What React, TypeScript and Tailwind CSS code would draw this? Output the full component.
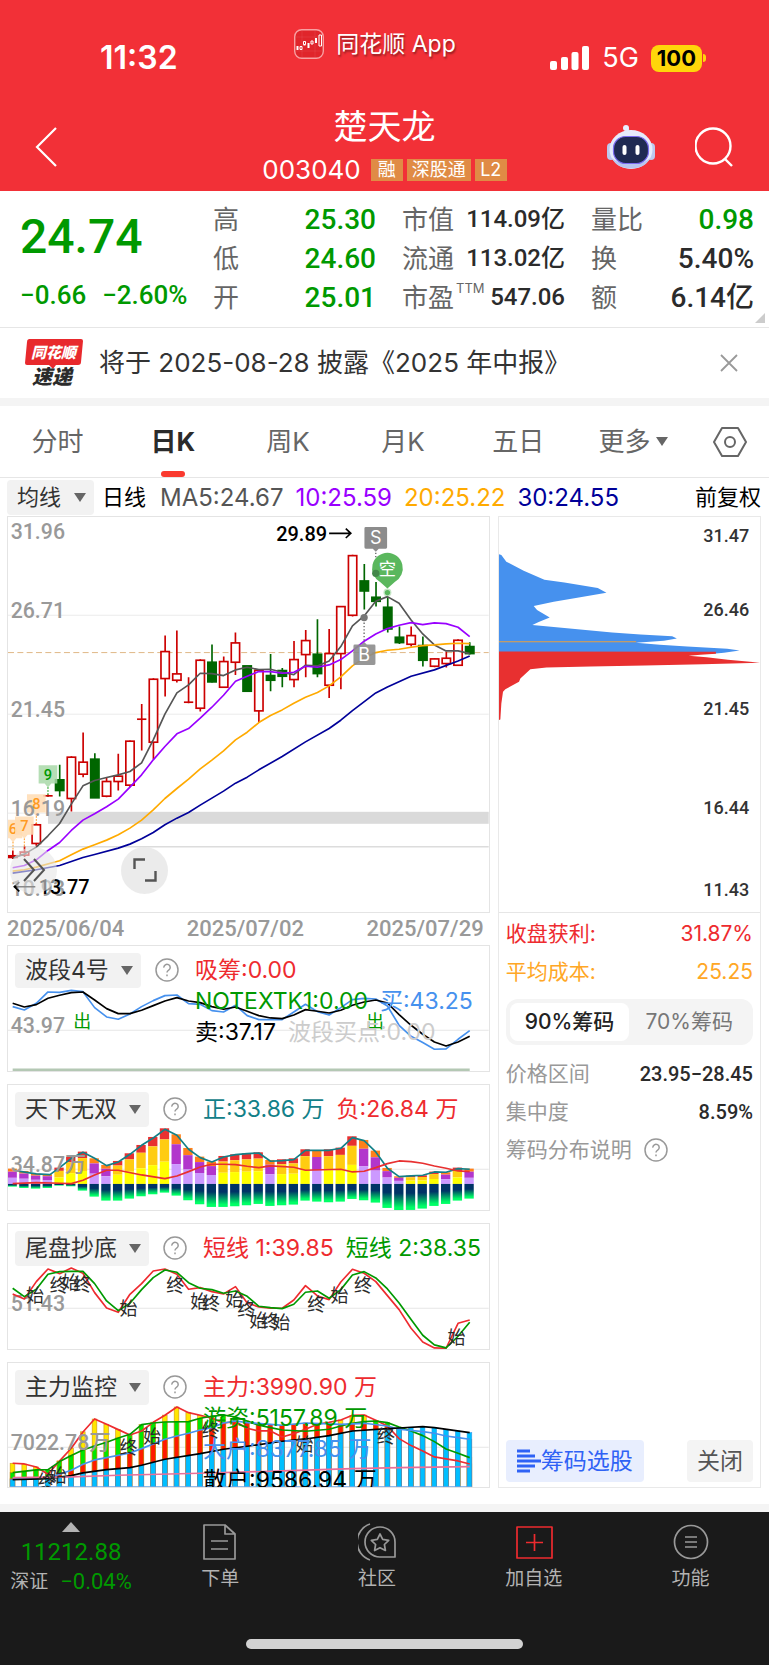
import { useState } from 'react';
import type { ReactNode } from 'react';

type Point = [number, number];

const NUM = "font-['Roboto','Noto_Sans_CJK_SC',sans-serif]";

// Charts are drawn on a 3x grid: one bar every STEP units
const STEP = 35.17;
const barX = (i: number) => 38.5 + STEP * i;

const quoteColumns = [
  [
    { label: '高', value: '25.30', color: 'text-[#009900]' },
    { label: '低', value: '24.60', color: 'text-[#009900]' },
    { label: '开', value: '25.01', color: 'text-[#009900]' },
  ],
  [
    { label: '市值', value: '114.09亿', color: 'text-[#2b2b2b]', small: true },
    { label: '流通', value: '113.02亿', color: 'text-[#2b2b2b]', small: true },
    { label: '市盈', sup: 'TTM', value: '547.06', color: 'text-[#2b2b2b]', small: true },
  ],
  [
    { label: '量比', value: '0.98', color: 'text-[#009900]' },
    { label: '换', value: '5.40%', color: 'text-[#2b2b2b]' },
    { label: '额', value: '6.14亿', color: 'text-[#2b2b2b]' },
  ],
];

const tabs = ['分时', '日K', '周K', '月K', '五日', '更多'];

// [up?, high, top, bottom, low]
const candles: [number, number, number, number, number][] = [
  [1, 1022, 1038, 1043, 1048], [1, 1010, 1027, 1036, 1042], [1, 940, 945, 1001, 1008],
  [1, 854, 858, 858, 861], [0, 765, 810, 842, 860], [1, 739, 742, 866, 905],
  [1, 668, 757, 793, 802], [0, 730, 748, 864, 864], [1, 802, 815, 859, 862],
  [1, 732, 799, 815, 842], [1, 692, 694, 826, 832], [1, 582, 628, 628, 722],
  [1, 505, 508, 697, 748], [1, 377, 425, 506, 560], [1, 362, 492, 511, 518],
  [1, 502, 577, 577, 580], [1, 448, 451, 595, 605], [0, 404, 457, 516, 518],
  [1, 440, 455, 532, 534], [1, 368, 399, 457, 495], [0, 468, 468, 544, 545],
  [1, 478, 481, 603, 638], [0, 432, 497, 511, 544], [0, 474, 482, 499, 532],
  [1, 393, 449, 509, 532], [1, 360, 392, 434, 502], [0, 328, 433, 491, 502],
  [1, 357, 431, 526, 564], [1, 288, 290, 431, 538], [1, 134, 137, 316, 320],
  [0, 162, 213, 243, 299], [0, 216, 262, 274, 290], [0, 262, 292, 357, 368],
  [0, 350, 382, 398, 402], [1, 350, 377, 403, 410], [0, 380, 407, 451, 470],
  [1, 445, 447, 469, 472], [1, 425, 445, 461, 473], [1, 388, 391, 466, 468],
  [0, 397, 410, 431, 434],
];

const ma5 = '38,1045 73,1033 109,1012 144,978 179,941 214,883 249,828 284,812 320,803 355,795 390,785 425,759 460,690 495,613 531,549 566,525 601,490 636,491 671,497 707,480 742,472 777,479 812,478 847,487 882,494 917,466 953,468 988,453 1023,410 1058,348 1093,318 1128,274 1163,260 1198,280 1234,330 1269,372 1304,405 1339,423 1375,423 1410,431';
const ma10 = '38,1074 73,1067 109,1050 144,1022 179,998 214,962 249,931 284,912 320,891 355,868 390,832 425,795 460,750 495,710 531,672 566,656 601,625 636,592 671,556 707,514 742,499 777,485 812,485 847,490 882,487 917,469 953,472 988,465 1023,449 1058,423 1093,394 1128,372 1163,356 1198,346 1234,338 1269,344 1304,339 1339,341 1375,352 1410,380';
const ma20 = '38,1084 73,1080 109,1072 179,1053 214,1035 249,1018 284,1005 320,991 355,975 390,955 425,931 460,900 495,866 531,836 566,808 601,777 636,751 671,723 707,690 742,667 777,638 812,617 847,600 882,580 917,562 953,548 988,528 1023,501 1058,468 1093,444 1128,428 1163,421 1198,418 1234,412 1269,407 1304,405 1339,402 1375,400 1410,401';
const ma30 = '38,1090 109,1080 179,1067 249,1043 284,1034 355,1015 390,1003 425,987 460,968 495,945 531,925 566,908 601,886 636,865 671,844 707,820 742,802 777,780 847,740 917,696 988,656 1023,631 1058,602 1128,549 1163,531 1234,499 1304,480 1375,453 1410,438';

const waveBuy = '38,197 73,207 109,187 144,153 179,154 214,148 249,152 284,200 320,228 355,235 390,219 425,197 460,179 495,164 531,162 566,188 601,190 636,209 671,213 707,193 742,224 777,236 812,236 847,236 882,213 917,190 953,212 988,222 1023,200 1058,176 1093,172 1128,174 1163,195 1198,253 1234,286 1269,305 1304,325 1339,324 1375,295 1410,269';
const waveSell = '38,187 73,198 109,191 144,172 179,163 214,155 249,153 284,177 320,203 355,218 390,218 425,208 460,194 495,180 531,170 566,180 601,185 636,197 671,205 707,198 742,211 777,224 812,231 847,233 882,222 917,206 953,211 988,216 1023,208 1058,193 1093,183 1128,177 1163,186 1198,221 1234,253 1269,280 1304,303 1339,315 1375,303 1410,286';

// Volume strength bars: [top, warm?, bottom]
const strength: [number, number, number][] = [
  [683, 0, 737], [690, 0, 741], [698, 0, 743], [700, 0, 741], [680, 1, 734], [648, 1, 736],
  [632, 1, 749], [652, 0, 767], [672, 0, 779], [660, 1, 779], [637, 1, 773], [612, 1, 766],
  [588, 1, 760], [562, 1, 755], [580, 0, 764], [621, 0, 778], [647, 0, 790], [662, 0, 798],
  [645, 1, 798], [640, 1, 796], [637, 1, 793], [634, 1, 789], [657, 0, 795], [655, 1, 793],
  [652, 1, 791], [625, 1, 779], [628, 0, 782], [625, 1, 784], [620, 1, 782], [586, 1, 774],
  [597, 0, 778], [629, 0, 785], [681, 0, 801], [706, 0, 808], [704, 1, 807], [703, 1, 803],
  [692, 1, 795], [694, 0, 789], [680, 1, 779], [683, 0, 773],
];
const strengthPos = '50,690 109,699 150,701 179,680 214,652 249,634 284,652 320,674 355,663 390,640 425,613 460,591 495,565 531,583 566,625 601,650 636,663 671,648 707,641 742,638 777,636 812,661 847,659 882,656 917,628 988,628 1023,622 1058,590 1093,599 1128,633 1163,682 1198,707 1234,705 1269,703 1304,693 1339,694 1375,683 1410,685';
const strengthNeg = '38,728 109,725 179,727 214,728 249,718 284,702 320,688 355,688 425,702 495,713 531,705 566,692 601,678 636,670 671,670 707,671 742,676 777,680 812,675 882,679 917,688 1023,685 1058,693 1093,691 1128,680 1163,668 1198,660 1234,662 1269,667 1304,675 1339,682 1375,690 1410,692';

const short1 = '38,249 73,264 109,212 144,174 179,188 214,171 249,187 284,245 320,291 355,304 390,250 425,218 460,180 495,174 531,190 566,235 601,230 636,242 671,249 707,227 742,276 777,288 812,292 847,292 882,267 917,224 953,255 988,266 1023,213 1058,175 1093,187 1128,212 1163,254 1198,296 1234,352 1269,393 1304,411 1339,412 1375,337 1410,327';
const short2 = '38,232 73,257 109,235 144,190 179,182 214,181 249,181 284,218 320,270 355,299 390,277 425,236 460,200 495,177 531,184 566,215 601,232 636,236 671,247 707,240 742,256 777,286 812,290 847,293 882,280 917,244 953,240 988,262 1023,236 1058,192 1093,182 1128,201 1163,234 1198,276 1234,326 1269,373 1304,402 1339,411 1375,376 1410,334';
const shortMarks: [string, number, number][] = [
  ['始', 105, 252], ['终', 176, 222], ['始', 212, 214], ['终', 247, 220], ['始', 386, 292],
  ['终', 526, 224], ['始', 598, 272], ['终', 633, 278], ['始', 703, 266], ['终', 739, 296],
  ['始', 775, 328], ['终', 810, 330], ['始', 844, 334], ['终', 949, 280], ['始', 1019, 254],
  ['终', 1090, 222], ['始', 1370, 378],
];

const mainForce: Point[] = [[38, 757], [73, 759], [109, 768], [144, 790], [179, 750], [214, 712], [249, 663], [284, 624], [320, 640], [355, 656], [390, 672], [425, 660], [460, 634], [495, 613], [531, 588], [566, 605], [601, 613], [636, 622], [671, 636], [707, 632], [742, 652], [777, 660], [812, 660], [847, 678], [882, 668], [917, 655], [953, 640], [988, 634], [1023, 627], [1058, 613], [1093, 612], [1128, 628], [1163, 645], [1198, 683], [1234, 704], [1269, 720], [1304, 738], [1339, 744], [1375, 750], [1410, 759]];
const hotMoney: Point[] = [[38, 785], [109, 777], [144, 776], [179, 752], [214, 734], [249, 717], [284, 705], [320, 694], [355, 681], [390, 670], [425, 641], [460, 636], [495, 633], [566, 632], [601, 622], [636, 616], [671, 612], [707, 618], [742, 630], [777, 643], [812, 650], [847, 657], [917, 661], [988, 655], [1023, 645], [1058, 637], [1093, 632], [1128, 630], [1163, 635], [1198, 648], [1234, 660], [1269, 674], [1304, 692], [1339, 714], [1375, 727], [1410, 740]];
const bigHolder: Point[] = [[38, 803], [144, 802], [179, 790], [214, 778], [249, 760], [284, 747], [320, 740], [390, 726], [425, 713], [495, 685], [531, 675], [566, 667], [601, 657], [636, 650], [671, 636], [707, 630], [742, 635], [812, 640], [847, 643], [917, 636], [1023, 640], [1093, 637], [1163, 645], [1198, 655], [1269, 662], [1304, 667], [1339, 675], [1375, 680], [1410, 685]];
const retail: Point[] = [[38, 806], [144, 803], [214, 794], [249, 786], [320, 776], [390, 770], [425, 763], [495, 745], [601, 728], [671, 715], [742, 706], [847, 691], [917, 684], [988, 674], [1058, 660], [1163, 653], [1198, 651], [1269, 647], [1304, 650], [1410, 665]];
const forceMarks: [string, number, number][] = [
  ['终', 140, 810], ['始', 173, 794], ['终', 386, 708], ['始', 456, 676],
  ['终', 632, 658], ['始', 914, 700], ['终', 1159, 677],
];

const valueAt = (line: Point[], x: number) => {
  const next = line.findIndex(([px]) => px >= x);
  if (next === -1) return line[line.length - 1][1];
  if (next === 0) return line[0][1];
  const [x0, y0] = line[next - 1];
  const [x1, y1] = line[next];
  return y0 + ((y1 - y0) * (x - x0)) / (x1 - x0);
};

const toPoints = (line: Point[]) => line.map((p) => p.join(',')).join(' ');

const Line = ({ points, color }: { points: string; color: string }) => (
  <polyline points={points} fill="none" stroke={color} strokeWidth="5" strokeLinejoin="round" />
);

const Marks = ({ items }: { items: [string, number, number][] }) => (
  <g fontSize="54" fill="#2b2b2b" textAnchor="middle">
    {items.map(([t, x, y]) => (
      <text key={x} x={x} y={y + 20}>{t}</text>
    ))}
  </g>
);

const AxisLabel = ({ y, children }: { y: number; children: ReactNode }) => (
  <text x="32" y={y} className={`${NUM} font-medium`} fontSize="64" fill="#999">{children}</text>
);

const Caret = ({ className = '' }: { className?: string }) => (
  <svg viewBox="0 0 12 9" className={`h-[9px] w-3 ${className}`} aria-hidden="true">
    <path d="M0 0h12L6 9z" fill="currentColor" />
  </svg>
);

const Help = ({ label }: { label: string }) => (
  <button aria-label={label} className="shrink-0 text-[#999]">
    <svg viewBox="0 0 24 24" className="size-6" fill="none" stroke="currentColor" strokeWidth="1.5">
      <circle cx="12" cy="12" r="11" />
      <path d="M8.8 9.6a3.2 3.2 0 1 1 4.9 2.6c-1.1.7-1.7 1.2-1.7 2.4" />
      <path d="M12 16.6v1.6" />
    </svg>
  </button>
);

const Picker = ({ name, label }: { name: string; label: string }) => (
  <div className="grid shrink-0 items-center rounded bg-[#f2f2f2] text-[#333]">
    <select
      aria-label={label}
      className="[grid-area:1/1] h-[35px] appearance-none bg-transparent pl-2.5 pr-8 leading-[35px]"
    >
      <option>{name}</option>
    </select>
    <Caret className="pointer-events-none mr-2 justify-self-end text-[#666] [grid-area:1/1]" />
  </div>
);

const Indicator = ({ name, viewBox, legend, children }: {
  name: string;
  viewBox: string;
  legend: { text: string; color: string }[][];
  children: ReactNode;
}) => (
  <section className="grid overflow-hidden border border-[#e4e4e4] text-[23px]">
    <svg viewBox={viewBox} className="block w-full [grid-area:1/1]">{children}</svg>
    <div className="flex h-0 min-h-full items-start pl-[7px] pt-[7px] [grid-area:1/1]">
      <Picker name={name} label="选择指标" />
      <div className="ml-3.5 flex h-[35px] items-center">
        <Help label={`${name}说明`} />
      </div>
      <div className="ml-4 whitespace-nowrap pt-0.5 leading-[31px]">
        {legend.map((row, i) => (
          <div key={i} className="flex gap-3">
            {row.map((l) => (
              <span key={l.text} className={l.color}>{l.text}</span>
            ))}
          </div>
        ))}
      </div>
    </div>
  </section>
);

const StatusBar = () => (
  <div className="flex items-start">
    <div className="w-[38%] pl-[100px] pt-[38px] text-[32px] font-semibold leading-10">11:32</div>
    <div className="flex items-center gap-3 pl-0.5 pt-[29px]">
      <svg viewBox="0 0 30 30" className="size-[30px]">
        <rect x=".7" y=".7" width="28.6" height="28.6" rx="7" fill="#e0252b" stroke="#f8a0a2" strokeWidth="1.4" />
        <path d="M2 8h26M2 22h26M8 2v26M21 2v26" stroke="#fff" strokeOpacity=".12" strokeWidth=".6" />
        <path d="M3.500 17v4M10.500 12.500v4M14.500 14v5M22 9v5" stroke="#fff" strokeWidth="2" />
        <path d="M6 17.500h2v3H6zM9.500 12.500h2v3h-2zM17 12h2v3h-2zM25 6h2.500v11H25z" fill="#e0252b" stroke="#fff" strokeWidth="1" />
      </svg>
      <span className="text-[23px] leading-[30px] [text-shadow:1px_2px_2px_rgba(0,0,0,0.4)]">同花顺 App</span>
    </div>
    <div className="flex flex-1 items-center justify-end gap-3 pr-[63px] pt-[38px]">
      <svg viewBox="0 0 40 24" className="h-6 w-10" fill="#fff">
        <rect y="15" width="7" height="9" rx="2" />
        <rect x="11" y="11" width="7" height="13" rx="2" />
        <rect x="21.500" y="6" width="7" height="18" rx="2" />
        <rect x="32" width="7" height="24" rx="2" />
      </svg>
      <span className="text-[27px] leading-10">5G</span>
      <span className="flex items-center gap-px">
        <span className="rounded-lg bg-[#ffd60a] px-1.5 text-[22px] font-bold leading-[27px] text-black">100</span>
        <span className="h-2 w-[3px] rounded-r-full bg-[#ffd60a]" />
      </span>
    </div>
  </div>
);

const Robot = () => (
  <svg viewBox="0 0 48 46" className="h-[46px] w-12">
    <path d="M22 10c-1-4-1-6-3-7" stroke="#c9d3f0" strokeWidth="2.500" fill="none" />
    <circle cx="19" cy="4" r="3" fill="#e8eeff" />
    <rect x="0" y="19" width="8" height="17" rx="4" fill="#bcc8ee" />
    <rect x="40" y="19" width="8" height="17" rx="4" fill="#bcc8ee" />
    <ellipse cx="24" cy="25.500" rx="21.500" ry="19.500" fill="#e6ebfb" />
    <path d="M5 34c5 14 33 14 38 0-8 8-30 8-38 0z" fill="#b9c5ee" />
    <rect x="6.500" y="12.500" width="35" height="27" rx="12" fill="#1f2a52" stroke="#7b6cf0" strokeWidth="1.200" />
    <rect x="15.500" y="21" width="4" height="10" rx="2" fill="#fff" />
    <rect x="28.500" y="21" width="4" height="10" rx="2" fill="#fff" />
  </svg>
);

const Header = () => (
  <header className="h-[191px] bg-[#f23037] text-white">
    <StatusBar />
    <div className="mt-[26px] flex items-center px-[34px]">
      <div className="flex flex-1">
        <button aria-label="返回">
          <svg viewBox="0 0 24 40" className="h-10 w-6" fill="none" stroke="#fff" strokeWidth="2.200">
            <path d="M22 1L3 20l19 19" />
          </svg>
        </button>
      </div>
      <div className="flex flex-col items-center">
        <h1 className="text-[34px] leading-[46px]">楚天龙</h1>
        <div className="flex items-center gap-1">
          <span className="mr-1.5 text-[26px] leading-10">003040</span>
          {['融', '深股通', 'L2'].map((t) => (
            <span key={t} className="min-w-8 bg-[#e08b45] px-[5px] text-center text-lg leading-[22px]">{t}</span>
          ))}
        </div>
      </div>
      <div className="flex flex-1 items-center justify-end gap-10">
        <button aria-label="智能助手"><Robot /></button>
        <button aria-label="搜索">
          <svg viewBox="0 0 40 40" className="size-10" fill="none" stroke="#fff" strokeWidth="2.400">
            <circle cx="18" cy="19" r="17.500" />
            <path d="M30 32l7 7" />
          </svg>
        </button>
      </div>
    </div>
  </header>
);

const Quote = () => (
  <section className="relative grid grid-cols-4 gap-x-[26px] border-b border-[#e6e6e6] pb-2.5 pl-6 pr-[15px] pt-[9px]">
    <div className={`${NUM} -ml-1 whitespace-nowrap font-medium text-[#009900]`}>
      <div className="pt-[7px] text-5xl leading-[60px]">24.74</div>
      <div className="flex gap-4 pt-2 text-[26px] leading-10">
        <span>−0.66</span>
        <span>−2.60%</span>
      </div>
    </div>
    {quoteColumns.map((rows, c) => (
      <dl key={c}>
        {rows.map((r) => (
          <div key={r.label} className="flex items-center justify-between whitespace-nowrap leading-[39px]">
            <dt className="text-[26px] text-[#666]">
              {r.label}
              {'sup' in r && <sup className="-top-3.5 pl-0.5 text-[13px]">{r.sup}</sup>}
            </dt>
            <dd className={`${NUM} font-medium ${r.color} ${'small' in r ? 'text-2xl leading-[39px]' : 'text-[28px] leading-[39px]'}`}>{r.value}</dd>
          </div>
        ))}
      </dl>
    ))}
    <svg viewBox="0 0 10 10" className="absolute bottom-1 right-1 size-2.5"><path d="M10 0v10H0z" fill="#ccc" /></svg>
  </section>
);

const Notice = () => (
  <section className="flex h-[78px] items-center border-b-8 border-[#f4f4f4] pl-[25px] pr-[31px]">
    <svg viewBox="0 0 58 48" className="h-12 w-[58px] overflow-visible">
      <path d="M4 0h52a2 2 0 0 1 2 2l-2 21a3 3 0 0 1-3 3H31l-3 4-4-4H2a2 2 0 0 1-2-2L2 3a3 3 0 0 1 2-3z" fill="#e8292d" />
      <text x="6" y="19" fontSize="15" fontWeight="900" fontStyle="italic" fill="#fff">同花顺</text>
      <text x="7" y="45" fontSize="20" fontWeight="900" fontStyle="italic" fill="#2b2b2b">速递</text>
    </svg>
    <p className="ml-4 flex-1 whitespace-nowrap text-[26px] leading-9 text-[#333]">将于 2025-08-28 披露《2025 年中报》</p>
    <button aria-label="关闭公告">
      <svg viewBox="0 0 18 18" className="size-[18px]" stroke="#999" strokeWidth="1.800"><path d="M1 1l16 16M17 1L1 17" /></svg>
    </button>
  </section>
);

const PeriodTabs = () => {
  const [active, setActive] = useState('日K');
  return (
    <nav className="flex h-[72px] border-b border-[#e6e6e6]">
      {tabs.map((t) => (
        <button
          key={t}
          onClick={() => setActive(t)}
          className={`relative flex flex-1 items-center justify-center gap-1.5 text-[26px] ${t === active ? 'font-bold text-[#2b2b2b]' : 'text-[#666]'}`}
        >
          {t}
          {t === '更多' && <Caret />}
          {t === active && <span className="absolute bottom-0 h-1.5 w-6 rounded-sm bg-[#fa3a2f]" />}
        </button>
      ))}
      <button aria-label="图表设置" className="flex w-[78px] items-center justify-center text-[#666]">
        <svg viewBox="0 0 34 30" className="h-[30px] w-[34px]" fill="none" stroke="currentColor" strokeWidth="2">
          <path d="M9 1h16l8 14-8 14H9L1 15z" strokeLinejoin="round" />
          <circle cx="17" cy="15" r="5" />
        </svg>
      </button>
    </nav>
  );
};

const Callout = ({ x, y, text, fill, color }: { x: number; y: number; text: string; fill: string; color: string }) => (
  <g>
    <path d={`M${x - 28} ${y}h56v55h-18l-10 12-10-12h-18z`} fill={fill} fillOpacity=".85" />
    <path d={`M${x} ${y + 66}v28`} stroke={color} strokeWidth="3" strokeDasharray="5 4" />
    <text x={x} y={y + 44} fontSize="44" textAnchor="middle" className={`${NUM} font-medium`} fill={color}>{text}</text>
  </g>
);

const CandleChart = () => (
  <div className="relative border border-[#e4e4e4]">
    <svg viewBox="24 21 1443 1185" className="block w-full">
      <path d="M24 316h1443M24 613h1443M24 910h1443" stroke="#ebebeb" strokeWidth="3" />
      <rect x="144" y="906" width="1323" height="36" fill="#dadada" />
      <path d="M24 1011h1443" stroke="#dcdcdc" strokeWidth="5" />
      <path d="M24 428h1443" stroke="#e0b887" strokeWidth="3" strokeDasharray="18 10" />
      <AxisLabel y={88}>31.96</AxisLabel>
      <AxisLabel y={325}>26.71</AxisLabel>
      <AxisLabel y={622}>21.45</AxisLabel>

      {candles.map(([up, high, top, bottom, low], i) => {
        const x = barX(i);
        const color = up ? '#cc0000' : '#006600';
        return (
          <g key={i} stroke={color} strokeWidth="5">
            <path d={`M${x} ${high}V${top}M${x} ${bottom}V${low}`} />
            {bottom - top < 4
              ? <path d={`M${x - 14} ${top}h28`} />
              : <rect x={x - 12.5} y={top} width="25" height={bottom - top} fill={up ? '#fff' : color} />}
          </g>
        );
      })}

      <Line points={ma5} color="#555" />
      <Line points={ma10} color="#9900ff" />
      <Line points={ma20} color="#ffaa00" />
      <Line points={ma30} color="#000099" />

      <Callout x={39} y={930} text="6" fill="#ffdcb3" color="#ff9a1f" />
      <Callout x={73} y={920} text="7" fill="#ffdcb3" color="#ff9a1f" />
      <Callout x={109} y={853} text="8" fill="#ffdcb3" color="#ff9a1f" />
      <Callout x={144} y={766} text="9" fill="#a8d8a8" color="#009900" />
      <AxisLabel y={920}>16.19</AxisLabel>
      <AxisLabel y={1159}>10.93</AxisLabel>

      {/* buy / sell points */}
      <path d="M1128 118v66M1093 328v70" stroke="#666" strokeWidth="4" strokeDasharray="4 6" />
      <circle cx="1093" cy="323" r="11" fill="#777" />
      <path d="M1098 51h60a4 4 0 0 1 4 4v57a4 4 0 0 1-4 4h-21l-9 9-9-9h-21a4 4 0 0 1-4-4V55a4 4 0 0 1 4-4z" fill="#8c8c8c" />
      <path d="M1065 404h20l8-8 8 8h22a4 4 0 0 1 4 4v53a4 4 0 0 1-4 4h-58a4 4 0 0 1-4-4v-53a4 4 0 0 1 4-4z" fill="#8c8c8c" fillOpacity=".9" />
      <g fontSize="54" fill="#fff" textAnchor="middle">
        <text x="1128" y="103">S</text>
        <text x="1093" y="454">B</text>
      </g>
      <path d="M1163 128a47 47 0 0 1 22 88l-22 20-22-20a47 47 0 0 1 22-88z" fill="#5ab75d" />
      <circle cx="1128" cy="190" r="11" fill="#43874a" />
      <text x="1163" y="194" fontSize="52" fill="#fff" textAnchor="middle">空</text>
      <circle cx="1163" cy="248" r="12" fill="#5ab75d" fillOpacity=".35" />
      <circle cx="1163" cy="248" r="8" fill="#5ab75d" />

      <g className={`${NUM} font-medium`} fontSize="60">
        <text x="829" y="94">29.89</text>
        <text x="116" y="1154">13.77</text>
      </g>
      <g fill="none" stroke="#000" strokeWidth="5">
        <path d="M988 70h64M1038 56l15 14-15 14" />
        <path d="M106 1131H44M58 1117l-15 14 15 14" />
      </g>
    </svg>
    <div className="absolute bottom-[18px] left-0.5 flex gap-16">
      <button aria-label="展开" className="flex size-[47px] items-center justify-center rounded-full bg-[#e6e6e6]/60">
        <svg viewBox="0 0 24 24" className="size-6" fill="none" stroke="#555" strokeWidth="2"><path d="M2 1l10 11L2 23M12 1l10 11-10 11" /></svg>
      </button>
      <button aria-label="全屏" className="flex size-[47px] items-center justify-center rounded-full bg-[#e6e6e6]/80">
        <svg viewBox="0 0 24 24" className="size-6" fill="none" stroke="#555" strokeWidth="2.400"><path d="M1.500 11V1.500H12M22.500 13v9.500H12" /></svg>
      </button>
    </div>
  </div>
);

const Indicators = () => (
  <div className="flex flex-col gap-3">
    <Indicator
      name="波段4号"
      viewBox="24 15 1443 375"
      legend={[
        [{ text: '吸筹:0.00', color: 'text-[#ee2b2f]' }],
        [
          { text: 'NOTEXTK1:0.00', color: 'text-[#009900]' },
          { text: '买:43.25', color: 'text-[#4691ee]' },
        ],
        [
          { text: '卖:37.17', color: 'text-black' },
          { text: '波段买点:0.00', color: 'text-[#ccc]' },
        ],
      ]}
    >
      <path d="M24 268h1443" stroke="#e6e6e6" strokeWidth="3" />
      <AxisLabel y={277}>43.97</AxisLabel>
      <Line points={waveBuy} color="#4691ee" />
      <Line points={waveSell} color="#000" />
      <path d="M38 387h1372" stroke="#b4c8b4" strokeWidth="8" />
      <g fontSize="54" fill="#009900" textAnchor="middle">
        <text x="247" y="260">出</text>
        <text x="1126" y="260">出</text>
      </g>
    </Indicator>

    <Indicator
      name="天下无双"
      viewBox="24 432 1443 375"
      legend={[[
        { text: '正:33.86 万', color: 'text-[#128088]' },
        { text: '负:26.84 万', color: 'text-[#ee2b2f]' },
      ]]}
    >
      <defs>
        <linearGradient id="depth" x1="0" x2="0" y1="0" y2="1">
          <stop offset="0.35" stopColor="#003366" />
          <stop offset="0.9" stopColor="#00ff66" />
        </linearGradient>
      </defs>
      <path d="M24 685h1443" stroke="#e6e6e6" strokeWidth="3" />
      {strength.map(([top, warm, bottom], i) => {
        const x = barX(i) - 16;
        const h = 729 - top;
        return (
          <g key={i}>
            <rect x={x} y={top} width="28" height={h * 0.2} fill={warm ? '#e83030' : '#ff801a'} />
            <rect x={x} y={top + h * 0.2} width="28" height={h * 0.4} fill={warm ? '#ffcc11' : '#b236cc'} />
            <rect x={x} y={top + h * 0.6} width="28" height={h * 0.4} fill={warm ? '#ffff00' : '#cc99ff'} />
            <rect x={x} y="729" width="28" height={bottom - 729} fill="url(#depth)" />
          </g>
        );
      })}
      <Line points={strengthPos} color="#128088" />
      <Line points={strengthNeg} color="#e83030" />
      <AxisLabel y={692}>34.87万</AxisLabel>
    </Indicator>

    <Indicator
      name="尾盘抄底"
      viewBox="24 39 1443 375"
      legend={[[
        { text: '短线 1:39.85', color: 'text-[#ee2b2f]' },
        { text: '短线 2:38.35', color: 'text-[#009900]' },
      ]]}
    >
      <path d="M24 292h1443" stroke="#e6e6e6" strokeWidth="3" />
      <AxisLabel y={300}>51.43</AxisLabel>
      <Line points={short1} color="#ee2b2f" />
      <Line points={short2} color="#009900" />
      <Marks items={shortMarks} />
    </Indicator>

    <Indicator
      name="主力监控"
      viewBox="24 456 1443 375"
      legend={[
        [{ text: '主力:3990.90 万', color: 'text-[#ee2b2f]' }],
        [{ text: '游资:5157.89 万', color: 'text-[#009900]' }],
        [{ text: '大户:8377.85 万', color: 'text-[#4691ee]' }],
        [{ text: '散户:9586.94 万', color: 'text-black' }],
      ]}
    >
      <path d="M24 709h1443" stroke="#e6e6e6" strokeWidth="3" />
      {candles.map((_, i) => {
        const x = barX(i);
        const layers: [Point[], string][] = [[mainForce, '#ffe600'], [hotMoney, '#00e600'], [bigHolder, '#ff1a00'], [retail, '#00bfff']];
        return (
          <g key={i} strokeWidth="2">
            {layers.map(([line, color]) => {
              const y = valueAt(line, x);
              return <rect key={color} x={x - 8} y={y} width="14" height={831 - y} fill={color} stroke={color === '#00bfff' ? '#2f8fe8' : '#c98a10'} strokeOpacity=".8" />;
            })}
          </g>
        );
      })}
      <path d="M30 829h1386" stroke="#6ba3e6" strokeWidth="6" />
      <Line points={toPoints(mainForce)} color="#ee2b2f" />
      <Line points={toPoints(hotMoney)} color="#009900" />
      <Line points={toPoints(bigHolder)} color="#4691ee" />
      <Line points={toPoints(retail)} color="#000" />
      <Line points="38,800 214,798 355,793 600,787 847,780 1058,773 1200,770 1410,767" color="#ea6f98" />
      <AxisLabel y={718}>7022.78万</AxisLabel>
      <Marks items={forceMarks} />
    </Indicator>
  </div>
);

const ChipPanel = () => {
  const [range, setRange] = useState('90%筹码');
  return (
    <aside className="flex flex-col border border-[#e9e9e9]">
      <svg viewBox="26 21 783 1185" className="block w-full">
        <polygon points="25,132 33,135 48,155 100,182 162,209 222,217 322,234 348,248 265,262 190,275 130,288 140,300 178,322 145,336 126,345 222,354 365,367 450,373 545,378 559,385 520,392 436,398 508,404 590,409 710,416 747,421 700,428 675,430 25,430" fill="#4691ee" />
        <polygon points="25,424 676,425 676,431 630,434 594,437 648,441 712,449 778,455 809,458 637,462 463,466 300,469 168,472 120,477 90,505 86,515 45,537 38,545 33,580 30,628 25,630" fill="#e83030" />
        <path d="M25 395h412" stroke="#e8a040" strokeWidth="3" />
        <g className={`${NUM} font-medium`} fontSize="54" fill="#333" textAnchor="end">
          <text x="776" y="96">31.47</text>
          <text x="776" y="317">26.46</text>
          <text x="776" y="614">21.45</text>
          <text x="776" y="910">16.44</text>
          <text x="776" y="1156">11.43</text>
        </g>
      </svg>
      <div className="flex flex-1 flex-col border-t border-[#e6e6e6] px-[7px] pb-[5px] pt-0.5 text-[21px] leading-[38px]">
        <div className="flex justify-between text-[#ee2b2f]"><span>收盘获利:</span><span>31.87%</span></div>
        <div className="flex justify-between text-[#ffa726]"><span>平均成本:</span><span>25.25</span></div>
        <div className="mb-2.5 mt-2 flex rounded-xl bg-[#f4f4f4] p-1">
          {['90%筹码', '70%筹码'].map((r) => (
            <button
              key={r}
              onClick={() => setRange(r)}
              className={`flex-1 whitespace-nowrap rounded-lg ${r === range ? 'bg-white font-medium text-[#222]' : 'text-[#777]'}`}
            >
              {r}
            </button>
          ))}
        </div>
        <div className="flex justify-between">
          <span className="text-[#999]">价格区间</span>
          <span className={`${NUM} text-xl font-medium leading-[38px] text-[#2b2b2b]`}>23.95−28.45</span>
        </div>
        <div className="flex justify-between">
          <span className="text-[#999]">集中度</span>
          <span className={`${NUM} text-xl font-medium leading-[38px] text-[#2b2b2b]`}>8.59%</span>
        </div>
        <div className="flex items-center gap-3 text-[#999]">
          筹码分布说明
          <Help label="筹码分布说明" />
        </div>
        <div className="mt-auto flex justify-between text-[23px] leading-[42px]">
          <button className="flex items-center whitespace-nowrap rounded bg-[#e8eefe] px-[11px] text-[#2f62f5]">
            <svg viewBox="0 0 24 24" className="size-6" stroke="currentColor" strokeWidth="3">
              <path d="M0 2h13M0 7h18M0 12h24M0 17h18M0 22h13" />
            </svg>
            筹码选股
          </button>
          <button className="whitespace-nowrap rounded bg-[#f4f4f4] px-2.5 text-[#555]">关闭</button>
        </div>
      </div>
    </aside>
  );
};

const navItems = [
  {
    label: '下单',
    icon: <path d="M2 1h21l10 9v25H2zM23 1v9h10M9 17h17M9 25h17" />,
  },
  {
    label: '社区',
    icon: (
      <>
        <path d="M21 3a15 15 0 0 1 15 15v15H21a15 15 0 0 1 0-30z" />
        <path d="M11 0A19 19 0 0 0 11 36" />
        <path d="M21 10l2.700 5.400 6 .9-4.300 4.200 1 6-5.400-2.800-5.400 2.800 1-6-4.300-4.200 6-.9z" />
      </>
    ),
  },
  {
    label: '加自选',
    icon: <path d="M1 3h35v31H1zM18.500 10v17M10 18.500h17" stroke="#ee2b2f" />,
  },
  {
    label: '功能',
    icon: (
      <>
        <circle cx="18" cy="18" r="16.500" />
        <path d="M12 13h12M12 18h12M12 23h12" />
      </>
    ),
  },
];

const BottomNav = () => (
  <footer className="border-t-8 border-[#f4f4f4]">
    <div className="bg-[#1a1a1a] text-[#b3b3b3]">
      <nav className="flex h-[127px] items-start">
        <a href="#index" className="flex w-[142px] flex-col items-center whitespace-nowrap pt-2.5">
          <svg viewBox="0 0 18 10" className="h-2.5 w-[18px]"><path d="M9 0l9 10H0z" fill="#b3b3b3" /></svg>
          <span className={`${NUM} text-2xl leading-10 text-[#009900]`}>11212.88</span>
          <span className="flex items-center gap-3 text-[19px] leading-5">
            深证
            <span className={`${NUM} text-[22px] leading-5 text-[#009900]`}>−0.04%</span>
          </span>
        </a>
        {navItems.map((n) => (
          <a key={n.label} href="#nav" className="flex flex-1 flex-col items-center pt-[11px]">
            <svg viewBox="-1 -1 38 38" className="size-[38px]" fill="none" stroke="#999" strokeWidth="1.700" strokeLinejoin="round">{n.icon}</svg>
            <span className="pt-1 text-[19px] leading-7">{n.label}</span>
          </a>
        ))}
      </nav>
      <div className="flex h-[26px] justify-center">
        <span className="h-2.5 w-[36%] rounded-full bg-[#d2d2d2]" />
      </div>
    </div>
  </footer>
);

export default function App() {
  return (
    <div className="bg-white font-['Inter','Noto_Sans_CJK_SC',sans-serif]">
      <Header />
      <Quote />
      <Notice />
      <PeriodTabs />
      <main className="pb-4 pl-[7px] pr-2 pt-0.5">
        <div className="flex items-center gap-3.5 whitespace-nowrap pb-px text-[22px] leading-[35px]">
          <div className="-mr-1.5"><Picker name="均线" label="主图指标" /></div>
          <span>日线</span>
          <div className="flex gap-3 text-2xl leading-[35px]">
            <span className="text-[#555]">MA5:24.67</span>
            <span className="text-[#9900ff]">10:25.59</span>
            <span className="text-[#ffaa00]">20:25.22</span>
            <span className="text-[#000099]">30:24.55</span>
          </div>
          <button className="ml-auto">前复权</button>
        </div>
        <div className="grid grid-cols-[11fr_6fr] gap-2">
          <div>
            <CandleChart />
            <div className={`${NUM} flex justify-between pr-1.5 text-[22px] font-medium leading-8 text-[#999]`}>
              <span>2025/06/04</span>
              <span>2025/07/02</span>
              <span>2025/07/29</span>
            </div>
            <Indicators />
          </div>
          <ChipPanel />
        </div>
      </main>
      <BottomNav />
    </div>
  );
}
